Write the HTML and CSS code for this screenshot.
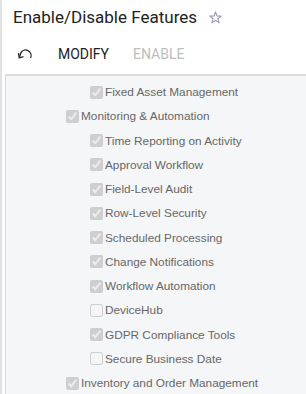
FILE: index.html
```html
<!DOCTYPE html>
<html lang="en">
<head>
    <meta charset="UTF-8">
    <meta name="viewport" content="width=device-width, initial-scale=1.0">
    <title>Enable/Disable Features</title>
    <link rel="stylesheet" href="styles.css">
</head>
<body>
    <div id="page">
        <div class="title-bar">
            <h1>Enable/Disable Features</h1>
            <svg class="star" width="13" height="13" viewBox="0 0 13 13">
                <path d="M6.5 1 L8 5 L12.2 5.1 L8.9 7.7 L10.1 11.8 L6.5 9.4 L2.9 11.8 L4.1 7.7 L0.8 5.1 L5 5 Z" fill="none" stroke="#9a9ab0" stroke-width="1.1" stroke-linejoin="round"/>
            </svg>
        </div>
        <div class="toolbar">
            <svg class="undo" width="16" height="12" viewBox="0 0 16 12">
                <path d="M13.5 10 A5.5 5.5 0 0 0 4 4.5 L2.5 9" fill="none" stroke="#333" stroke-width="1.4"/>
                <path d="M1.5 5 L2.2 9.8 L6.5 8.6" fill="none" stroke="#333" stroke-width="1.4"/>
            </svg>
            <span class="btn">MODIFY</span>
            <span class="btn disabled">ENABLE</span>
        </div>
        <div id="tree">
            <label class="item lvl2"><input type="checkbox" checked disabled>Fixed Asset Management</label>
            <label class="item lvl1"><input type="checkbox" checked disabled>Monitoring &amp; Automation</label>
            <label class="item lvl2"><input type="checkbox" checked disabled>Time Reporting on Activity</label>
            <label class="item lvl2"><input type="checkbox" checked disabled>Approval Workflow</label>
            <label class="item lvl2"><input type="checkbox" checked disabled>Field-Level Audit</label>
            <label class="item lvl2"><input type="checkbox" checked disabled>Row-Level Security</label>
            <label class="item lvl2"><input type="checkbox" checked disabled>Scheduled Processing</label>
            <label class="item lvl2"><input type="checkbox" checked disabled>Change Notifications</label>
            <label class="item lvl2"><input type="checkbox" checked disabled>Workflow Automation</label>
            <label class="item lvl2"><input type="checkbox" disabled>DeviceHub</label>
            <label class="item lvl2"><input type="checkbox" checked disabled>GDPR Compliance Tools</label>
            <label class="item lvl2"><input type="checkbox" disabled>Secure Business Date</label>
            <label class="item lvl1"><input type="checkbox" checked disabled>Inventory and Order Management</label>
        </div>
    </div>
</body>
</html>
```

FILE: styles.css
```css
body {
    margin: 0;
    font-family: Roboto, Arial, sans-serif;
    background: #fff;
    overflow: hidden;
}
#page {
    border-left: 2px solid #e2e2e2;
    height: 394px;
    box-sizing: border-box;
    padding-left: 3px;
}
.title-bar {
    display: flex;
    align-items: center;
    height: 34px;
    padding-left: 8px;
}
h1 {
    margin: 0;
    font-size: 17px;
    font-weight: normal;
    color: #222;
}
.star {
    margin-left: 12px;
}
.toolbar {
    display: flex;
    align-items: center;
    height: 40px;
    padding-left: 12px;
}
.undo {
    margin-right: 25px;
}
.btn {
    font-size: 14px;
    color: #222;
    margin-right: 24px;
}
.btn.disabled {
    color: #bdbdbd;
}
#tree {
    background: #f5f6f8;
    border-top: 2px solid #dcdcdc;
    border-left: 1px solid #dcdcdc;
    padding-top: 4px;
}
.item {
    display: flex;
    align-items: center;
    height: 24.25px;
    font-family: "Liberation Sans", Arial, sans-serif;
    font-size: 11.8px;
    color: #666;
    white-space: nowrap;
}
.item input {
    width: 13px;
    height: 13px;
    margin: 0 2px 0 0;
}
.lvl1 {
    padding-left: 60px;
}
.lvl2 {
    padding-left: 84px;
}
```
